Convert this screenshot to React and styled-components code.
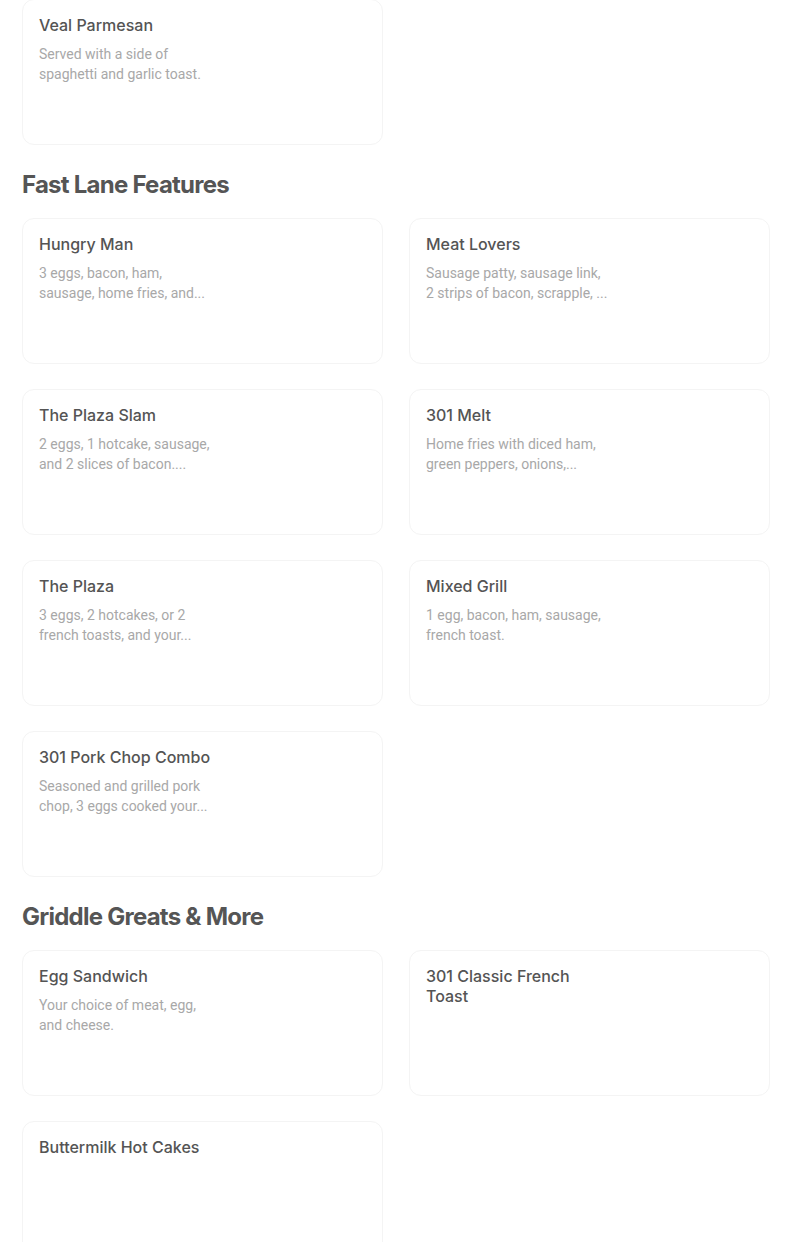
import React from "react"
import styled, { createGlobalStyle } from "styled-components"

const GlobalStyle = createGlobalStyle`
  html, body {
    margin: 0;
    padding: 0;
    background: #ffffff;
  }
  body {
    font-family: Roboto, "Liberation Sans", sans-serif;
    -webkit-font-smoothing: antialiased;
  }
`

const Page = styled.div`
  width: 748px;
  margin: -1px 0 0 22px;
`

const Section = styled.section`
  display: flex;
  flex-direction: column;
`

const SectionTitle = styled.h2`
  margin: 24px 0 17px;
  font-family: Inter, "Liberation Sans", sans-serif;
  font-size: 24px;
  line-height: 32px;
  font-weight: 700;
  letter-spacing: -0.75px;
  color: #555555;
`

const Grid = styled.div`
  display: grid;
  grid-template-columns: 1fr 1fr;
  column-gap: 26px;
  row-gap: 25px;
`

const Card = styled.div`
  box-sizing: border-box;
  height: 146px;
  padding: 15px 16px 16px;
  border: 1px solid #f4f4f4;
  border-radius: 12px;
  background: #fff;
  display: flex;
`

const TextCol = styled.div`
  width: 178px;
  display: flex;
  flex-direction: column;
  gap: 9px;
`

const ItemName = styled.div`
  font-family: Inter, Roboto, sans-serif;
  font-size: 16px;
  line-height: 20px;
  font-weight: 500;
  color: #545454;
`

const ItemDesc = styled.div`
  font-size: 14px;
  line-height: 20px;
  color: #a8a8a8;
`

const DescLine = styled.span`
  display: block;
  white-space: nowrap;
`

const sections = [
  {
    title: null,
    items: [
      { name: "Veal Parmesan", desc: ["Served with a side of", "spaghetti and garlic toast."] },
    ],
  },
  {
    title: "Fast Lane Features",
    items: [
      { name: "Hungry Man", desc: ["3 eggs, bacon, ham,", "sausage, home fries, and..."] },
      { name: "Meat Lovers", desc: ["Sausage patty, sausage link,", "2 strips of bacon, scrapple, ..."] },
      { name: "The Plaza Slam", desc: ["2 eggs, 1 hotcake, sausage,", "and 2 slices of bacon...."] },
      { name: "301 Melt", desc: ["Home fries with diced ham,", "green peppers, onions,..."] },
      { name: "The Plaza", desc: ["3 eggs, 2 hotcakes, or 2", "french toasts, and your..."] },
      { name: "Mixed Grill", desc: ["1 egg, bacon, ham, sausage,", "french toast."] },
      { name: "301 Pork Chop Combo", desc: ["Seasoned and grilled pork", "chop, 3 eggs cooked your..."] },
    ],
  },
  {
    title: "Griddle Greats & More",
    items: [
      { name: "Egg Sandwich", desc: ["Your choice of meat, egg,", "and cheese."] },
      { name: "301 Classic French Toast" },
      { name: "Buttermilk Hot Cakes" },
    ],
  },
]

const App = () => {
  return (
    <>
      <GlobalStyle />
      <Page>
        {sections.map((section, i) => (
          <Section key={i}>
            {section.title && <SectionTitle>{section.title}</SectionTitle>}
            <Grid>
              {section.items.map((item) => (
                <Card key={item.name}>
                  <TextCol>
                    <ItemName>{item.name}</ItemName>
                    {item.desc && (
                      <ItemDesc>
                        {item.desc.map((line) => (
                          <DescLine key={line}>{line}</DescLine>
                        ))}
                      </ItemDesc>
                    )}
                  </TextCol>
                </Card>
              ))}
            </Grid>
          </Section>
        ))}
      </Page>
    </>
  )
}

export default App
